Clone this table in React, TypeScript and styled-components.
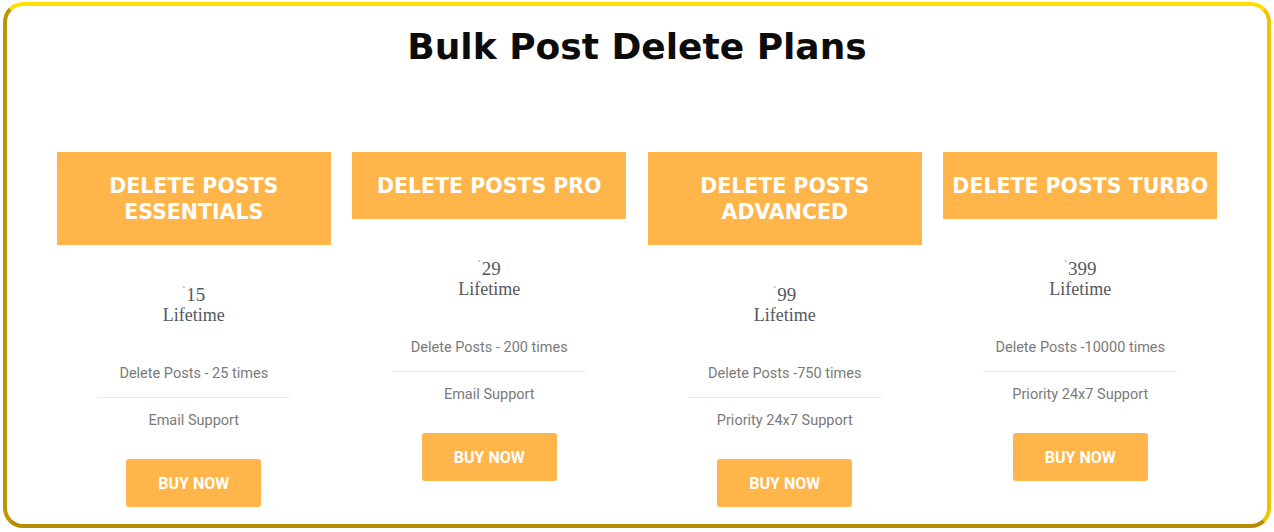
import React from "react";
import styled, { createGlobalStyle } from "styled-components";

const GlobalStyle = createGlobalStyle`
  html, body {
    margin: 0;
    padding: 0;
    background: #ffffff;
  }
  * {
    box-sizing: border-box;
  }
`;

type Plan = {
  name: string;
  price: string;
  features: string[];
  oneLine?: boolean;
};

const plans: Plan[] = [
  { name: "Delete Posts Essentials", price: "15", features: ["Delete Posts - 25 times", "Email Support"] },
  { name: "Delete Posts Pro", price: "29", features: ["Delete Posts - 200 times", "Email Support"], oneLine: true },
  { name: "Delete Posts Advanced", price: "99", features: ["Delete Posts -750 times", "Priority 24x7 Support"] },
  { name: "Delete Posts Turbo", price: "399", features: ["Delete Posts -10000 times", "Priority 24x7 Support"], oneLine: true },
];

const Frame = styled.div`
  margin: 2px 3px 0 3px;
  width: 1268px;
  height: 526px;
  border: 4px solid;
  border-color: #ffe000 #f0c400 #b88c00 #c39300;
  border-radius: 20px;
  padding-top: 19px;
  background: #ffffff;
`;

const Title = styled.h1`
  margin: 0;
  text-align: center;
  font-family: "DejaVu Sans", "Liberation Sans", sans-serif;
  font-weight: 700;
  font-size: 36px;
  line-height: 44px;
  color: #0c0c0c;
`;

const Grid = styled.div`
  margin-top: 83px;
  display: grid;
  grid-template-columns: repeat(4, 274px);
  column-gap: 21.5px;
  justify-content: center;
  align-items: start;
`;

const Card = styled.div`
  display: flex;
  flex-direction: column;
  align-items: center;
`;

const Header = styled.div<{ $oneLine?: boolean }>`
  width: 100%;
  background: #ffb54a;
  color: #ffffff;
  text-align: center;
  text-transform: uppercase;
  font-family: "DejaVu Sans", "Liberation Sans", sans-serif;
  font-weight: 700;
  font-size: 20.5px;
  line-height: 26px;
  padding: 20.5px ${(p) => (p.$oneLine ? "2px" : "22px")};
  white-space: ${(p) => (p.$oneLine ? "nowrap" : "normal")};
`;

const Price = styled.div`
  margin-top: 38.5px;
  text-align: center;
  font-family: "Liberation Serif", "DejaVu Serif", serif;
  color: #54595f;
  font-size: 19px;
  line-height: 21px;
`;

const Currency = styled.span`
  font-size: 9px;
  vertical-align: top;
  line-height: 12px;
  margin-right: 1px;
`;

const Period = styled.div`
  font-size: 18px;
`;

const Features = styled.ul`
  list-style: none;
  margin: 25.5px 0 0 0;
  padding: 0;
  width: 194px;
`;

const Feature = styled.li`
  text-align: center;
  font-family: Roboto, "Liberation Sans", sans-serif;
  font-size: 14.5px;
  line-height: 22px;
  color: #7a7a7a;
  padding: 12px 0;
  white-space: nowrap;
  & + & {
    border-top: 1px solid #ececec;
  }
`;

const BuyButton = styled.button`
  margin-top: 15px;
  width: 135px;
  height: 48px;
  border: none;
  border-radius: 3px;
  background: #ffb54a;
  color: #ffffff;
  font-family: Roboto, "Liberation Sans", sans-serif;
  font-weight: 700;
  font-size: 16px;
  text-transform: uppercase;
  cursor: pointer;
`;

export default function App() {
  return (
    <>
      <GlobalStyle />
      <Frame>
        <Title>Bulk Post Delete Plans</Title>
        <Grid>
          {plans.map((plan) => (
            <Card key={plan.name}>
              <Header $oneLine={plan.oneLine}>{plan.name}</Header>
              <Price>
                <Currency>`</Currency>
                {plan.price}
                <Period>Lifetime</Period>
              </Price>
              <Features>
                {plan.features.map((f) => (
                  <Feature key={f}>{f}</Feature>
                ))}
              </Features>
              <BuyButton>Buy Now</BuyButton>
            </Card>
          ))}
        </Grid>
      </Frame>
    </>
  );
}
